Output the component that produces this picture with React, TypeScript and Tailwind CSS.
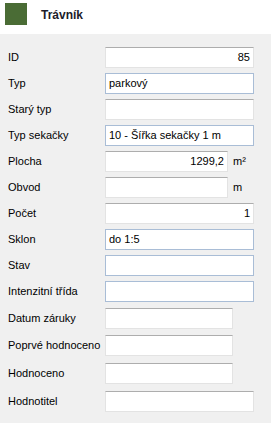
import React from "react";

type Row = {
  label: string;
  value?: string;
  align?: "left" | "right";
  kind: "edit" | "combo";
  width: string;
  unit?: string;
  mt: string;
};

const rows: Row[] = [
  { label: "ID", value: "85", align: "right", kind: "edit", width: "w-[149px]", mt: "mt-[13px]" },
  { label: "Typ", value: "parkový", kind: "combo", width: "w-[149px]", mt: "mt-[5px]" },
  { label: "Starý typ", kind: "edit", width: "w-[149px]", mt: "mt-[5px]" },
  { label: "Typ sekačky", value: "10 - Šířka sekačky 1 m", kind: "combo", width: "w-[149px]", mt: "mt-[5px]" },
  { label: "Plocha", value: "1299,2", align: "right", kind: "edit", width: "w-[123px]", unit: "m²", mt: "mt-[5px]" },
  { label: "Obvod", kind: "edit", width: "w-[123px]", unit: "m", mt: "mt-[5px]" },
  { label: "Počet", value: "1", align: "right", kind: "edit", width: "w-[149px]", mt: "mt-[5px]" },
  { label: "Sklon", value: "do 1:5", kind: "combo", width: "w-[149px]", mt: "mt-[5px]" },
  { label: "Stav", kind: "combo", width: "w-[149px]", mt: "mt-[5px]" },
  { label: "Intenzitní třída", kind: "combo", width: "w-[149px]", mt: "mt-[5px]" },
  { label: "Datum záruky", kind: "edit", width: "w-[128px]", mt: "mt-[6px]" },
  { label: "Poprvé hodnoceno", kind: "edit", width: "w-[128px]", mt: "mt-[6px]" },
  { label: "Hodnoceno", kind: "edit", width: "w-[128px]", mt: "mt-[7px]" },
  { label: "Hodnotitel", kind: "edit", width: "w-[149px]", mt: "mt-[7px]" },
];

function Field({ row }: { row: Row }) {
  const box =
    row.kind === "combo"
      ? "border border-[#a9bdd6]"
      : "border border-[#e3e3e3] border-t-[#adadad]";
  return (
    <div className={`flex h-[21px] items-center ${row.mt}`}>
      <div className="w-[105px] pl-[8px] text-black">{row.label}</div>
      <div
        className={`flex h-[21px] items-center bg-white px-[3px] ${box} ${row.width} ${
          row.align === "right" ? "justify-end" : "justify-start"
        }`}
      >
        {row.value}
      </div>
      {row.unit && <div className="pl-[5px]">{row.unit}</div>}
    </div>
  );
}

export default function App() {
  return (
    <div className="h-[423px] w-[271px] bg-[#f0f0f0] text-[11px] leading-none font-['Liberation_Sans',Arial,sans-serif]">
      <div className="flex h-[34px] items-start bg-white">
        <div className="ml-[5px] mt-[3px] h-[22px] w-[22px] bg-[#4a6c35]" />
        <div className="ml-[14px] mt-[9px] text-[12px] font-bold text-[#1c1c2a]">Trávník</div>
      </div>
      <div className="flex flex-col">
        {rows.map((r) => (
          <Field key={r.label} row={r} />
        ))}
      </div>
    </div>
  );
}
